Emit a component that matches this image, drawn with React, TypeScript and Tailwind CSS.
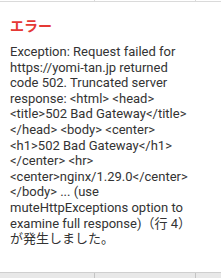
export default function App() {
  const lines = [
    'Exception: Request failed for',
    'https://yomi-tan.jp returned',
    'code 502. Truncated server',
    'response: <html> <head>',
    '<title>502 Bad Gateway</title>',
    '</head> <body> <center>',
    '<h1>502 Bad Gateway</h1>',
    '</center> <hr>',
    '<center>nginx/1.29.0</center>',
    '</body> ... (use',
    'muteHttpExceptions option to',
    'examine full response)（行 4）',
    'が発生しました。',
  ];

  return (
    <div className="flex h-[278px] w-[221px] flex-col overflow-hidden bg-white font-['Roboto','Noto_Sans_CJK_JP',sans-serif]">
      {/* grid row above */}
      <div className="flex h-[2px] border-b border-[#dadada]">
        <div className="w-[95px] border-r border-[#dadada]" />
        <div className="w-[101px] border-r border-[#dadada]" />
        <div className="flex-1" />
      </div>

      <div className="flex-1 px-[10px] pt-[15px]">
        <h2 className="text-[14px] font-bold leading-[18px] text-[#e53935]">エラー</h2>
        <div className="mt-[9px] text-[13px] leading-[15.6px] text-[#333333]">
          {lines.map((line) => (
            <div key={line} className="whitespace-nowrap">{line}</div>
          ))}
        </div>
      </div>

      {/* grid row below */}
      <div className="flex h-[6px] border-t border-[#cfcfcf] bg-[#e8e8e8]">
        <div className="w-[95px] border-r border-[#c4c4c4]" />
        <div className="w-[101px] border-r border-[#c4c4c4]" />
        <div className="flex-1" />
      </div>
    </div>
  );
}
